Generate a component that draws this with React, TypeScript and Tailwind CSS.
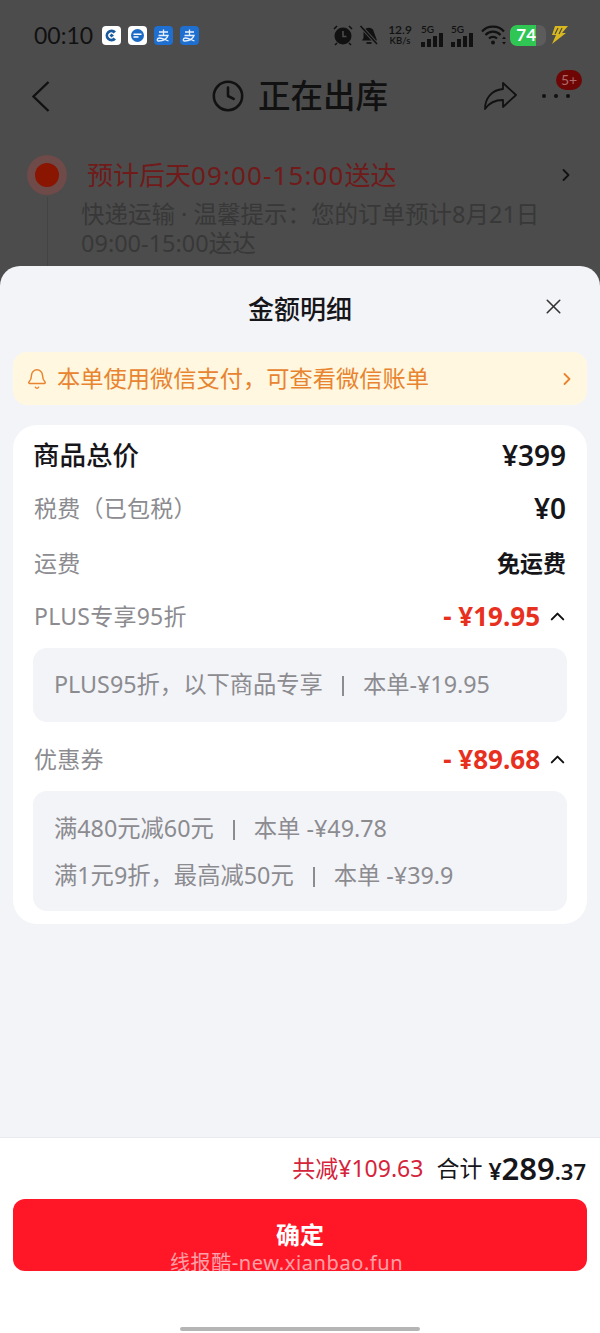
import React from 'react';
import { ChevronRight, ChevronUp, Clock, X, Bell } from 'lucide-react';

const FONT = 'font-["Noto_Sans","Noto_Sans_CJK_SC",sans-serif]';
const NUM = 'font-["Lato","Noto_Sans_CJK_SC",sans-serif]';

const AlipayIcon = () => (
  <div className="flex h-[19px] w-[19px] items-center justify-center rounded-[4px] bg-[#1e6fd0]">
    <svg width="15" height="15" viewBox="0 0 15 15" fill="none" stroke="#e8f2ff" strokeWidth="1.3">
      <path d="M3 4h9M7.5 1.5V7M2.5 7.5h9.5C11 10.5 8 13 2.5 13c-2 0-1.5-3 1-3 3 0 6 2 9 3" />
    </svg>
  </div>
);

const Signal = () => (
  <div className="relative h-[23px] w-[26px]">
    <span className={`absolute left-0 top-0 text-[10px] font-semibold leading-[10px] text-[#111] ${NUM}`}>5G</span>
    <div className="absolute bottom-0 left-0 flex items-end gap-[2px]">
      <div className="h-[5px] w-[4px] bg-[#111]" />
      <div className="h-[8px] w-[4px] bg-[#111]" />
      <div className="h-[11px] w-[4px] bg-[#111]" />
      <div className="h-[14px] w-[4px] bg-[#111]" />
    </div>
  </div>
);

const StatusBar = () => (
  <div className="flex h-[70px] items-center pl-[34px] pr-[31px]">
    <span className={`w-[68px] text-[23px] leading-none text-[#111] ${NUM}`}>00:10</span>
    <div className="flex items-center gap-[7px]">
      <div className="flex h-[19px] w-[19px] items-center justify-center rounded-[4px] bg-white">
        <svg width="15" height="15" viewBox="0 0 15 15">
          <path d="M12 3.5A6 6 0 1 0 12 11.5L9.5 9.5A3 3 0 1 1 9.5 5.5Z" fill="#1a5a9e" />
          <path d="M7.5 5.5 10 7.5 7.5 9.5 5.5 7.5Z" fill="#1a5a9e" />
        </svg>
      </div>
      <div className="flex h-[19px] w-[19px] items-center justify-center rounded-[4px] bg-white">
        <svg width="15" height="15" viewBox="0 0 15 15">
          <circle cx="7.5" cy="7.5" r="6.5" fill="#1b6cc4" />
          <path d="M3.5 6.3h8M3.5 9h5" stroke="#fff" strokeWidth="1.4" />
        </svg>
      </div>
      <AlipayIcon />
      <AlipayIcon />
    </div>
    <div className="ml-auto flex items-center">
      <svg width="20" height="22" viewBox="0 0 20 22" className="mr-[6px]">
        <circle cx="10" cy="12" r="8.5" fill="#111" />
        <path d="M10 7v5.5h3.5" stroke="#4c4c4c" strokeWidth="1.6" fill="none" />
        <path d="M1 5 4 2M19 5l-3-3M4 19l-2 2M16 19l2 2" stroke="#111" strokeWidth="1.6" />
      </svg>
      <svg width="20" height="20" viewBox="0 0 20 20" className="mr-[8px]">
        <path d="M3 15.5 4.5 13V8a5.5 5.5 0 0 1 9.5-3.5L18 15.5Z" fill="#111" />
        <path d="M7.5 18h5" stroke="#111" strokeWidth="1.8" />
        <path d="M1.5 1 18 19" stroke="#4c4c4c" strokeWidth="3.4" />
        <path d="M1.5 1 18 19" stroke="#111" strokeWidth="1.6" />
      </svg>
      <div className={`mr-[8px] flex w-[26px] flex-col items-center text-[#111] ${NUM}`}>
        <span className="text-[12px] font-semibold leading-[12px]">12.9</span>
        <span className="text-[9.5px] font-semibold leading-[10px]">KB/s</span>
      </div>
      <div className="mr-[4px]"><Signal /></div>
      <Signal />
      <svg width="26" height="22" viewBox="0 0 26 22" className="ml-[4px] mr-[3px]">
        <path d="M1 7.5C6.5 1 17.5 1 23 7.5M4.5 11c4-4.5 11-4.5 15 0M8 14.5c2.2-2.3 5.8-2.3 8 0" stroke="#111" strokeWidth="2.2" fill="none" />
        <circle cx="12" cy="18.5" r="2" fill="#111" />
        <path d="M21 15l2-2.5 2 2.5ZM21 18l2 2.5 2-2.5Z" fill="#111" />
      </svg>
      <div className="relative mr-[5px] h-[21px] w-[36px] overflow-hidden rounded-[7px] bg-[#5c5c5c]">
        <div className={`flex h-full w-[26px] items-center justify-end rounded-l-[6px] bg-[#2fc653] text-[17px] font-bold text-white ${NUM}`}>74</div>
      </div>
      <svg width="18" height="20" viewBox="0 0 18 20">
        <path d="M4 1h13L11 8h4L1 19l4-9H1Z" fill="#d9b81f" />
        <path d="M7 3 4 9M11 3 8 9" stroke="#4c4c4c" strokeWidth="1.2" />
      </svg>
    </div>
  </div>
);

const NavBar = () => (
  <div className="relative flex h-[52px] items-center">
    <svg width="20" height="33" viewBox="0 0 20 33" fill="none" stroke="#111" strokeWidth="2.4" className="ml-[31px]">
      <path d="M17.5 2 2.5 16.5 17.5 31" />
    </svg>
    <div className="absolute left-[211px] flex items-center gap-[13px]">
      <Clock size={34} strokeWidth={1.8} className="text-[#111]" />
      <span className={`text-[32.5px] font-medium leading-none text-[#111] ${FONT}`}>正在出库</span>
    </div>
    <div className="ml-auto mr-[30px] flex items-center gap-[25px]">
      <svg width="34" height="30" viewBox="0 0 34 30" fill="none" stroke="#111" strokeWidth="1.8" strokeLinejoin="round">
        <path d="M20 2 33 14 20 26V19C12 19 6 22 2 28 2 18 8 9 20 8Z" />
      </svg>
      <div className="flex gap-[8px]">
        <div className="h-[4px] w-[4px] rounded-full bg-[#111]" />
        <div className="h-[4px] w-[4px] rounded-full bg-[#111]" />
        <div className="h-[4px] w-[4px] rounded-full bg-[#111]" />
      </div>
    </div>
    <div className={`absolute left-[556px] top-0 flex h-[20px] w-[26px] items-center justify-center rounded-full bg-[#6e0606] text-[14px] leading-none text-[#b06a6a] ${NUM}`}>5+</div>
  </div>
);

const DeliveryInfo = () => (
  <div className="relative flex pl-[27px] pr-[24px] pt-[33px]">
    <div className="flex w-[40px] flex-col items-center">
      <div className="flex h-[40px] w-[40px] shrink-0 items-center justify-center rounded-full bg-[#6e4a48]">
        <div className="h-[24px] w-[24px] rounded-full bg-[#8a1500]" />
      </div>
      <div className="mt-[2px] h-[80px] w-px bg-[#444]" />
    </div>
    <div className="ml-[14px] flex-1">
      <div className="flex h-[40px] items-center justify-between">
        <span className={`ml-[6px] text-[26px] leading-none text-[#701a1a] ${FONT}`}>
          预计后天<span className="tracking-[1.1px]">09:00-15:00</span>送达
        </span>
        <ChevronRight size={20} strokeWidth={2.2} className="text-[#111]" />
      </div>
      <p className={`mt-[5px] text-[23.5px] leading-[29px] text-[#383838] ${FONT}`}>
        快递运输 · 温馨提示：您的订单预计8月21日
        <br />
        09:00-15:00送达
      </p>
    </div>
  </div>
);

const PriceRow = ({ label, children }: { label: string; children: React.ReactNode }) => (
  <div className="flex h-[30px] items-center justify-between">
    <span className={`text-[23px] leading-none tracking-[0.25px] text-[#8b8b90] ${FONT}`}>{label}</span>
    {children}
  </div>
);

const Divider = () => <span className="mx-[19px] inline-block h-[20px] w-[2px] bg-[#8b8b90] align-[-3px]" />;

const DiscountAmount = ({ value }: { value: string }) => (
  <div className="flex items-center">
    <span className={`text-[26px] font-bold leading-none text-[#e8301f] ${FONT}`}>- ¥{value}</span>
    <ChevronUp size={23} strokeWidth={2.1} className="-mr-[3px] ml-[6px] text-[#111]" />
  </div>
);

export default function App() {
  return (
    <div className={`relative flex h-[1333px] w-[600px] flex-col overflow-hidden bg-[#4c4c4c] ${FONT}`}>
      <div className="h-[266px] shrink-0 overflow-hidden">
        <StatusBar />
        <NavBar />
        <DeliveryInfo />
      </div>

      {/* bottom sheet */}
      <div className="flex flex-1 flex-col overflow-hidden rounded-t-[20px] bg-[#f3f4f8]">
        <div className="relative flex h-[86px] shrink-0 items-center justify-center">
          <span className="text-[26px] font-medium leading-none text-[#16161a]">金额明细</span>
          <X size={25} strokeWidth={1.5} className="absolute right-[34px] top-[28px] text-[#333]" />
        </div>

        <div className="mx-[13px] flex h-[53px] shrink-0 items-center rounded-[14px] bg-[#fff7e0] pl-[13px] pr-[10px] text-[#e8842f]">
          <Bell size={22} strokeWidth={1.6} />
          <span className="ml-[9px] text-[23.25px] leading-none">本单使用微信支付，可查看微信账单</span>
          <ChevronRight size={20} strokeWidth={2.2} className="ml-auto" />
        </div>

        <div className="mx-[13px] mt-[20px] flex h-[499px] shrink-0 flex-col rounded-[24px] bg-white px-[21px] pt-[14px]">
          <div className="flex h-[32px] items-center justify-between">
            <span className="-ml-px text-[26.5px] font-medium leading-none text-[#16161a]">商品总价</span>
            <span className="text-[28px] font-semibold leading-none text-[#16161a]">¥399</span>
          </div>
          <div className="mt-[22px]">
            <PriceRow label="税费（已包税）">
              <span className="text-[28px] font-semibold leading-none text-[#16161a]">¥0</span>
            </PriceRow>
          </div>
          <div className="mt-[25px]">
            <PriceRow label="运费">
              <span className="text-[23px] font-bold leading-none text-[#16161a]">免运费</span>
            </PriceRow>
          </div>
          <div className="mt-[23px]">
            <PriceRow label="PLUS专享95折">
              <DiscountAmount value="19.95" />
            </PriceRow>
          </div>
          <div className="-mx-px mt-[17px] flex h-[74px] items-center rounded-[14px] bg-[#f3f4f8] px-[21px] text-[23.3px] leading-none text-[#8b8b90]">
            <span>PLUS95折，以下商品专享<Divider />本单-¥19.95</span>
          </div>
          <div className="mt-[22px]">
            <PriceRow label="优惠券">
              <DiscountAmount value="89.68" />
            </PriceRow>
          </div>
          <div className="-mx-px mt-[17px] flex h-[120px] flex-col justify-center gap-[17px] rounded-[14px] bg-[#f3f4f8] px-[21px] text-[23.3px] leading-[30px] text-[#8b8b90]">
            <span>满480元减60元<Divider />本单 -¥49.78</span>
            <span>满1元9折，最高减50元<Divider />本单 -¥39.9</span>
          </div>
        </div>

        <div className="flex-1" />

        {/* footer */}
        <div className="relative h-[196px] shrink-0 border-t border-[#e9eaee] bg-white">
          <div className="flex h-[61px] items-center justify-end pr-[14px]">
            <span className="text-[23px] leading-none text-[#d5233a]">共减¥109.63</span>
            <span className="ml-[13px] text-[23px] leading-none text-[#16161a]">合计</span>
            <span className="ml-[6px] flex items-baseline font-semibold leading-none text-[#16161a]">
              <span className="text-[23px]">¥</span>
              <span className="text-[31px]">289</span>
              <span className="text-[22px]">.37</span>
            </span>
          </div>
          <div className="mx-[13px] flex h-[72px] items-center justify-center rounded-[12px] bg-[#ff1727] text-[24px] font-bold leading-none text-white">
            确定
          </div>
          <div className="flex h-[62px] items-end justify-center pb-[2px]">
            <div className="h-[4px] w-[240px] rounded-full bg-[#b5b5b5]" />
          </div>
          <span className="absolute left-[170px] top-[115px] text-[20px] leading-none tracking-[0.6px] text-white/60">线报酷-new.xianbao.fun</span>
        </div>
      </div>
    </div>
  );
}
